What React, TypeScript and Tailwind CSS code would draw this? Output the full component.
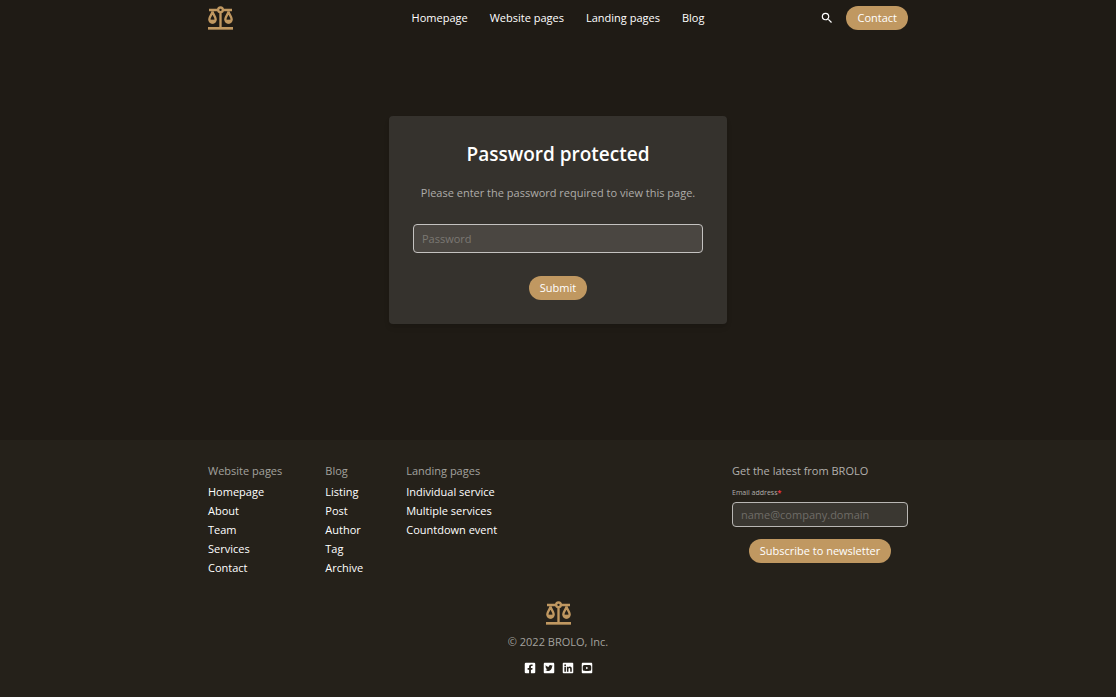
import React from 'react'
import { MdSearch } from 'react-icons/md'
import { FaFacebookSquare, FaTwitterSquare, FaLinkedin, FaYoutubeSquare } from 'react-icons/fa'

const navLinks = ['Homepage', 'Website pages', 'Landing pages', 'Blog']

const footerColumns = [
  {
    title: 'Website pages',
    links: ['Homepage', 'About', 'Team', 'Services', 'Contact'],
  },
  {
    title: 'Blog',
    links: ['Listing', 'Post', 'Author', 'Tag', 'Archive'],
  },
  {
    title: 'Landing pages',
    links: ['Individual service', 'Multiple services', 'Countdown event'],
  },
]

const socials = [
  { name: 'Facebook', Icon: FaFacebookSquare },
  { name: 'Twitter', Icon: FaTwitterSquare },
  { name: 'LinkedIn', Icon: FaLinkedin },
  { name: 'YouTube', Icon: FaYoutubeSquare },
]

const buttonClass =
  'rounded-full bg-[#c09861] px-[11px] py-1 text-[11px] leading-4 font-medium text-white hover:bg-[#cda670]'

function Logo() {
  return (
    <svg viewBox="0 0 75 70" className="h-6 w-[25px] text-[#c09861]" fill="none" stroke="currentColor" aria-hidden="true">
      <circle cx="37.5" cy="10.5" r="7" strokeWidth="7" />
      <path d="M3 11H30M45 11H72M37.5 18V63" strokeWidth="7" />
      <path d="M0 66H75" strokeWidth="8" />
      {/* pans */}
      <path d="M13.5 15C12 25 4 30 4 39a9.500 9.500 0 0 0 19 0C23 30 15 25 13.500 15Z" strokeWidth="7" />
      <path d="M61.5 15C60 25 52 30 52 39a9.500 9.500 0 0 0 19 0C71 30 63 25 61.500 15Z" strokeWidth="7" />
      <path d="M4 41H23a9.500 9.500 0 0 1-19 0ZM52 41H71a9.500 9.500 0 0 1-19 0Z" fill="currentColor" strokeWidth="2" />
    </svg>
  )
}

function Header() {
  return (
    <header className="px-4">
      <div className="mx-auto grid h-9 max-w-[700px] grid-cols-[1fr_auto_1fr] items-center">
        <a href="#" aria-label="BROLO home" className="justify-self-start">
          <Logo />
        </a>
        <nav className="flex gap-[22px] font-medium">
          {navLinks.map((link) => (
            <a key={link} href="#">{link}</a>
          ))}
        </nav>
        <div className="flex items-center gap-3 justify-self-end">
          <button type="button" aria-label="Search">
            <MdSearch className="size-[14px]" />
          </button>
          <a href="#" className={buttonClass}>Contact</a>
        </div>
      </div>
    </header>
  )
}

function PasswordCard() {
  return (
    <main className="px-4 pt-20 pb-[116px]">
      <form className="mx-auto flex max-w-[338px] flex-col items-center rounded-sm bg-[#35322d] p-6 shadow-md">
        <h1 className="text-[19px] leading-7 font-semibold">Password protected</h1>
        <p className="mt-4 leading-[17px] text-[#aeaca9]">Please enter the password required to view this page.</p>
        <input
          type="password"
          aria-label="Password"
          placeholder="Password"
          className="mt-[23px] h-[29px] w-full rounded-sm border border-[#c4c2c0] bg-[#4a4641] px-2 placeholder:text-[#7b7873]"
        />
        <button type="submit" className={`mt-[23px] ${buttonClass}`}>Submit</button>
      </form>
    </main>
  )
}

function Footer() {
  return (
    <footer className="grow bg-[#25211a] px-4 py-[23px]">
      <div className="mx-auto flex max-w-[700px] justify-between">
        <div className="flex gap-[43px]">
          {footerColumns.map((column) => (
            <div key={column.title}>
              <h2 className="leading-4 text-[#a3a19e]">{column.title}</h2>
              <ul className="mt-[3px] font-medium">
                {column.links.map((link) => (
                  <li key={link} className="leading-[19px]">
                    <a href="#">{link}</a>
                  </li>
                ))}
              </ul>
            </div>
          ))}
        </div>
        <form className="flex w-44 flex-col">
          <h2 className="leading-4 text-[#b2b0ad]">Get the latest from BROLO</h2>
          <label htmlFor="email" className="mt-2 text-[7px] leading-3 text-[#b2b0ad]">
            Email address<span className="font-bold text-[#ef3340]">*</span>
          </label>
          <input
            id="email"
            type="email"
            required
            placeholder="name@company.domain"
            className="mt-[3px] h-[25px] rounded-sm border border-[#b9b7b4] bg-[#3a3731] px-2 placeholder:text-[#6f6c67]"
          />
          <button type="submit" className={`mt-3 self-center ${buttonClass}`}>Subscribe to newsletter</button>
        </form>
      </div>

      <div className="mt-6 flex flex-col items-center">
        <Logo />
        <p className="mt-[9px] leading-4 text-[#a3a19e]">© 2022 BROLO, Inc.</p>
        <div className="mt-3 flex gap-[7px]">
          {socials.map(({ name, Icon }) => (
            <a key={name} href="#" aria-label={name}>
              <Icon className="size-3" />
            </a>
          ))}
        </div>
      </div>
    </footer>
  )
}

export default function App() {
  return (
    <div className="flex min-h-screen flex-col bg-[#1f1b15] font-['Open_Sans',sans-serif] text-[11px] text-white">
      <Header />
      <PasswordCard />
      <Footer />
    </div>
  )
}
